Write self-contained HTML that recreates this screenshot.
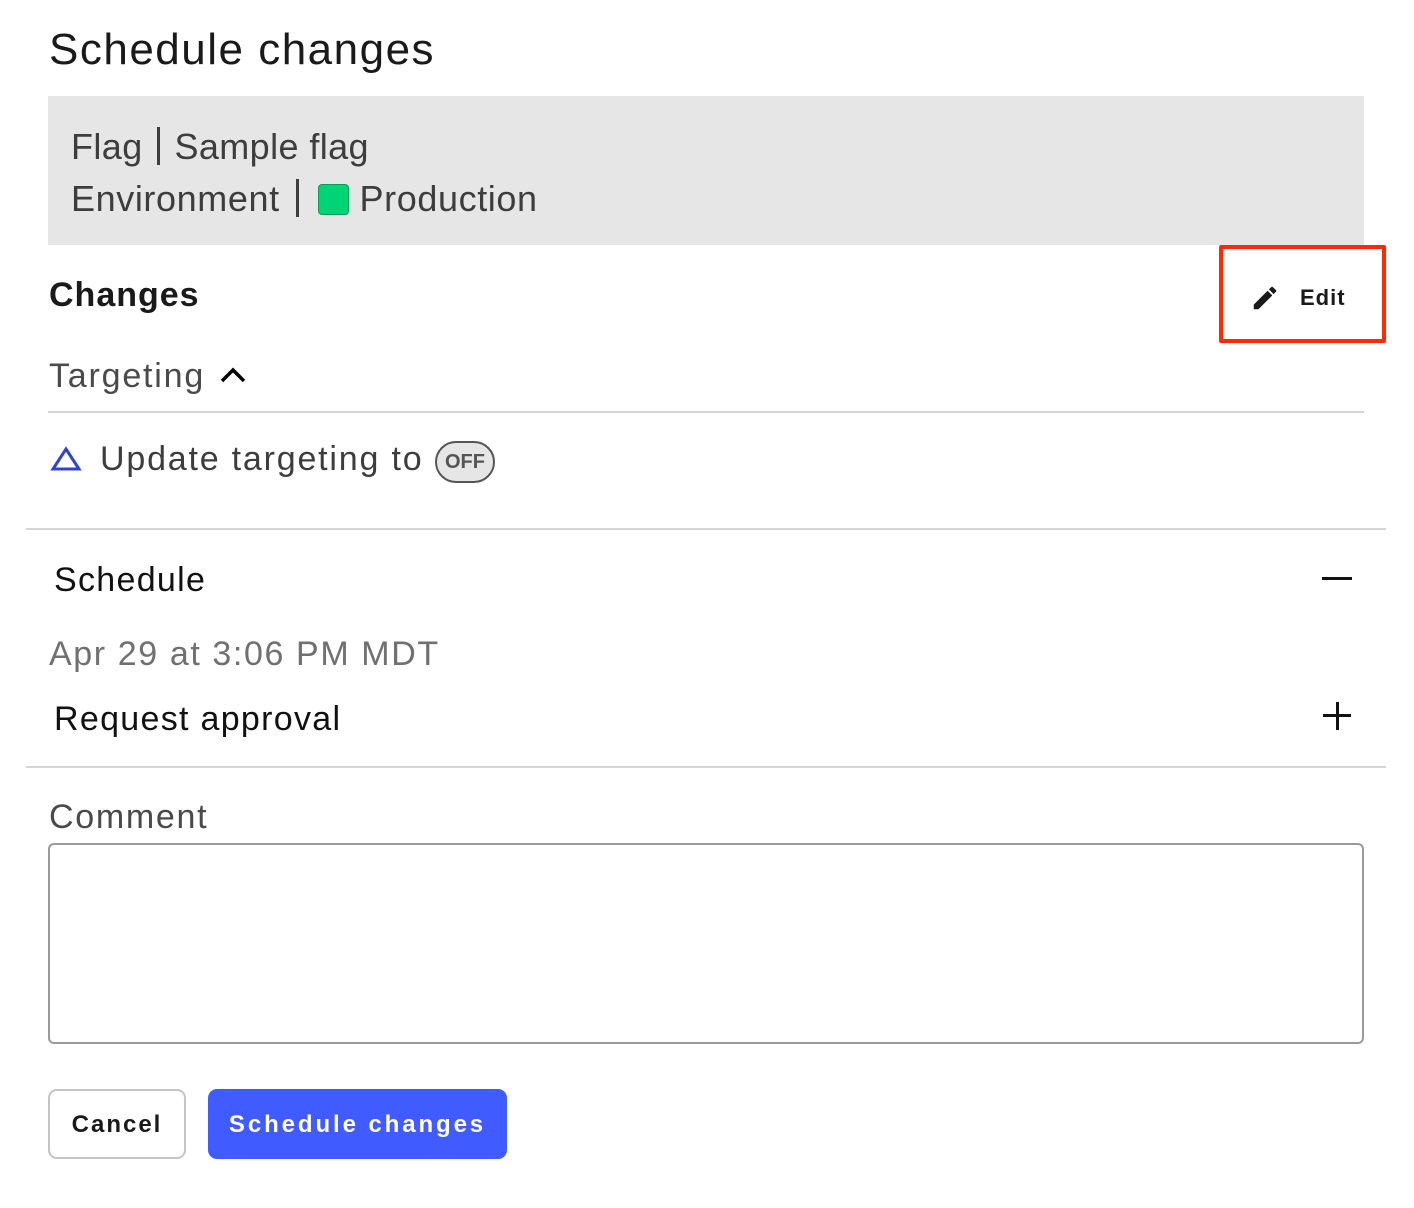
<!DOCTYPE html>
<html><head><style>
body{margin:0;width:1414px;height:1208px;background:#fff;font-family:"Liberation Sans",sans-serif;position:relative;overflow:hidden}
.t{position:absolute;line-height:1;white-space:nowrap}
.hr{position:absolute;height:2px;background:#d4d4d4}
</style></head><body>
<div class="t" style="left:49px;top:28px;font-size:44px;color:#1a1a1a;letter-spacing:1.5px">Schedule changes</div>
<div style="position:absolute;left:48px;top:96px;width:1316px;height:149px;background:#e6e6e6"></div>
<div class="t" style="left:71px;top:127px;font-size:36px;color:#3d3d3d;letter-spacing:0.4px">Flag <span style="display:inline-block;width:3px;height:38px;background:#3d3d3d;vertical-align:-6px;margin:0 4px"></span> Sample flag</div>
<div class="t" style="left:71px;top:179px;font-size:36px;color:#3d3d3d;letter-spacing:0.6px">Environment <span style="display:inline-block;width:3px;height:38px;background:#3d3d3d;vertical-align:-6px;margin:0 6px 0 6px"></span> <span style="display:inline-block;width:31px;height:31px;background:#00d474;border:1px solid #0a9c55;border-radius:4px;vertical-align:-4px;box-sizing:border-box;margin-right:0;margin-left:2px"></span> Production</div>
<div class="t" style="left:49px;top:278px;font-size:34px;font-weight:bold;color:#1a1a1a;letter-spacing:1px">Changes</div>
<div style="position:absolute;left:1219px;top:245px;width:167px;height:98px;border:4px solid #ff2a00;box-sizing:border-box;border-radius:2px"></div>
<svg style="position:absolute;left:1250px;top:283px" width="30" height="30" viewBox="0 0 24 24"><path d="M3 17.25V21h3.75L17.81 9.94l-3.75-3.75L3 17.25zM20.71 7.04a1 1 0 0 0 0-1.41l-2.34-2.34a1 1 0 0 0-1.41 0l-1.83 1.830 3.75 3.75 1.83-1.83z" fill="#1a1a1a"/></svg>
<div class="t" style="left:1300px;top:287px;font-size:22px;font-weight:bold;color:#1a1a1a;letter-spacing:1px">Edit</div>
<div class="t" style="left:49px;top:359px;font-size:34px;color:#4a4a4a;letter-spacing:1.8px">Targeting</div>
<svg style="position:absolute;left:219px;top:364px" width="28" height="20" viewBox="0 0 28 20"><path d="M3 17L14 6L25 17" stroke="#000" stroke-width="3.5" fill="none"/></svg>
<div class="hr" style="left:48px;top:411px;width:1316px"></div>
<svg style="position:absolute;left:50px;top:446px" width="32" height="26" viewBox="0 0 32 26"><path d="M16 3L29 23H3Z" stroke="#3344cc" stroke-width="3" fill="none" stroke-linejoin="miter"/></svg>
<div class="t" style="left:100px;top:442px;font-size:34px;color:#3d3d3d;letter-spacing:1.8px">Update targeting to</div>
<div style="position:absolute;left:435px;top:441px;width:60px;height:42px;box-sizing:border-box;border:2px solid #555;border-radius:21px;background:#e6e6e6;font-size:20px;font-weight:bold;color:#555;text-align:center;line-height:38px">OFF</div>
<div class="hr" style="left:26px;top:528px;width:1360px"></div>
<div class="t" style="left:54px;top:563px;font-size:34px;color:#111;letter-spacing:1.3px">Schedule</div>
<div style="position:absolute;left:1322px;top:577px;width:30px;height:3px;background:#111"></div>
<div class="t" style="left:49px;top:637px;font-size:34px;color:#707070;letter-spacing:1.6px">Apr 29 at 3:06 PM MDT</div>
<div class="t" style="left:54px;top:702px;font-size:34px;color:#111;letter-spacing:1.3px">Request approval</div>
<div style="position:absolute;left:1323px;top:714px;width:28px;height:3px;background:#111"></div>
<div style="position:absolute;left:1336px;top:702px;width:3px;height:28px;background:#111"></div>
<div class="hr" style="left:26px;top:766px;width:1360px"></div>
<div class="t" style="left:49px;top:800px;font-size:34px;color:#4a4a4a;letter-spacing:1.7px">Comment</div>
<div style="position:absolute;left:48px;top:843px;width:1316px;height:201px;box-sizing:border-box;border:2px solid #9a9a9a;border-radius:6px"></div>
<div style="position:absolute;left:48px;top:1089px;width:138px;height:70px;box-sizing:border-box;border:2px solid #c4c4c4;border-radius:9px;font-size:24px;font-weight:bold;color:#1a1a1a;text-align:center;line-height:68px;letter-spacing:2px">Cancel</div>
<div style="position:absolute;left:208px;top:1089px;width:299px;height:70px;background:#405bff;border-radius:9px;font-size:24px;font-weight:bold;color:#fff;text-align:center;line-height:72px;letter-spacing:2.9px">Schedule changes</div>
</body></html>
